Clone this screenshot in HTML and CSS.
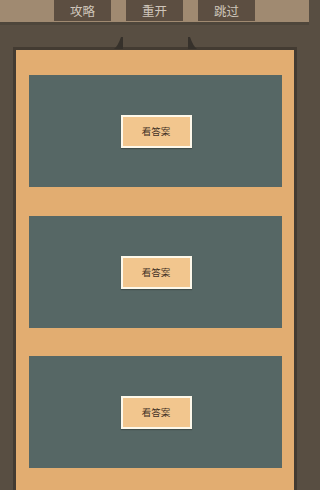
FILE: index.html
```html
<!DOCTYPE html>
<html>
<head>
<meta charset="utf-8">
<link rel="stylesheet" href="styles.css">
</head>
<body>
<div class="topbar">
  <div class="tbtn">攻略</div>
  <div class="tbtn">重开</div>
  <div class="tbtn">跳过</div>
</div>
<div class="stage">
  <div class="frame">
    <svg class="tri tri-l" width="9" height="12" viewBox="0 0 9 12"><path d="M9 12 L0 12 Q4 9 7 0 L9 0 Z" fill="#36312b"/></svg>
    <svg class="tri tri-r" width="9" height="12" viewBox="0 0 9 12"><path d="M0 12 L9 12 Q5 9 2 0 L0 0 Z" fill="#36312b"/></svg>
    <div class="panel">
      <div class="card"><div class="ans">看答案</div></div>
      <div class="card"><div class="ans">看答案</div></div>
      <div class="card"><div class="ans">看答案</div></div>
    </div>
  </div>
</div>
</body>
</html>
```
FILE: styles.css
```css
html, body {
  margin: 0;
  padding: 0;
  width: 309px;
  height: 490px;
  overflow: hidden;
  background: #584e42;
  font-family: "Noto Sans CJK SC", "Noto Sans", sans-serif;
}
.topbar {
  height: 22px;
  background: #a08a71;
  display: flex;
  justify-content: center;
  gap: 15px;
  border-bottom: 3px solid #4e463b;
}
.tbtn {
  width: 57px;
  height: 21px;
  background: #5c4e41;
  color: #cfc6bb;
  font-size: 12.5px;
  line-height: 21px;
  text-align: center;
}
.stage {
  padding: 22px 12px 0 13px;
}
.frame {
  position: relative;
  background: #433b32;
  padding: 3px 3px 0 3px;
}
.tri {
  position: absolute;
  top: -10px;
}
.tri-l { left: 101px; }
.tri-r { left: 175px; }
.panel {
  background: #e2ad71;
  padding: 25px 12px 30px 13px;
  display: flex;
  flex-direction: column;
  gap: 28.5px;
}
.card {
  height: 112px;
  background: #566765;
  display: flex;
  align-items: center;
  justify-content: center;
}
.ans {
  width: 67px;
  height: 29px;
  border: 2px solid #fdf8ea;
  background: #f2c68e;
  color: #3f3125;
  font-size: 9.5px;
  line-height: 29px;
  text-align: center;
  box-shadow: 0 1px 1px rgba(0,0,0,0.25);
  margin-left: 1px;
  margin-top: 1px;
}
```
